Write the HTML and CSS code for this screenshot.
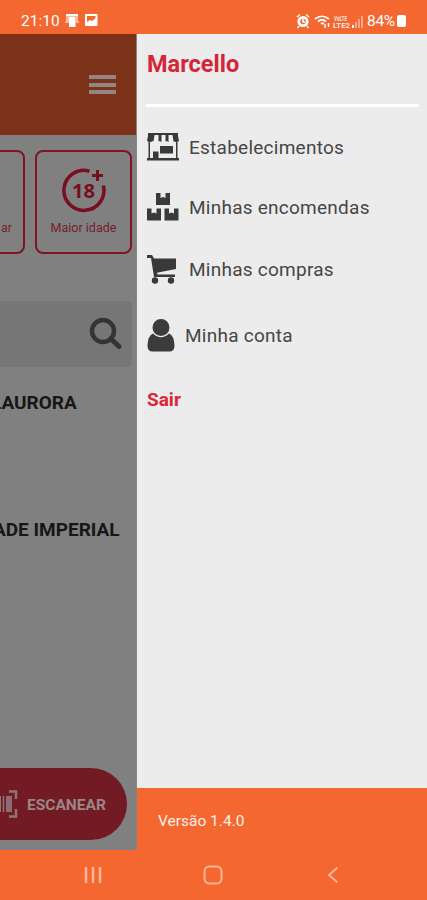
FILE: index.html
```html
<!DOCTYPE html>
<html lang="pt-BR">
<head>
<meta charset="utf-8">
<meta name="viewport" content="width=device-width">
<title>Menu</title>
<link rel="stylesheet" href="styles.css">
</head>
<body>
<div class="phone">
  <header class="status">
    <span class="clock">21:10</span>
    <svg class="status-left" width="34" height="16" viewBox="0 0 34 16" fill="#fff">
      <path d="M1 1h12v7h1v2h-3v4H5v-4H0V8h1z" opacity=".55"/><path d="M4 4h6v10H4zM1 1h12v2H1z"/>
      <path fill-rule="evenodd" d="M20 1h12.500v12H20zM22 3v6l3-2 2 1 3.500-3V3z"/>
    </svg>
    <svg class="status-right" width="69" height="17" viewBox="0 0 69 17" fill="none" stroke="#fff">
      <circle cx="7" cy="8.500" r="4.200" stroke-width="2.800"/><path d="M1 4l3-2.500M10 1.500L13 4M3 13l-1.500 2M11 13l1.500 2M7 6v3h2" stroke-width="1.500"/>
      <path d="M19 6q7-5.500 14 0M22 8.500q4-3.500 8 0M25 11q1.500-1.500 3 0" stroke-width="1.700"/>
      <path d="M29 11v4M32.500 10v4" stroke-width="1.500"/>
      <path d="M57 15v-3" stroke-width="2"/><path d="M60 15V9M63 15V6M66 15V3" stroke-width="1.700" opacity=".5"/>
      <text class="lte" x="38" y="7.500" textLength="13" lengthAdjust="spacingAndGlyphs">VoLTE</text><text class="lte" x="37" y="14.500" textLength="17" lengthAdjust="spacingAndGlyphs">LTE2</text>
    </svg>
    <span class="battery-text">84%</span>
    <span class="battery"></span>
  </header>
  <div class="body">
    <main class="page">
      <div class="topbar"><span class="burger"><i></i><i></i><i></i></span></div>
      <div class="cards">
        <div class="card card-cut"><span>ar</span></div>
        <div class="card card-age">
          <svg width="48" height="48" viewBox="0 0 48 48" fill="none" stroke="#760f20" stroke-width="3.500">
            <path d="M29.500 4.200A20 20 0 1 0 43.300 18.500"/><path d="M37.500 3v11M32 8.500h11" stroke-width="3"/>
            <text class="age" x="12" y="31" textLength="23" lengthAdjust="spacingAndGlyphs">18</text>
          </svg>
          <span>Maior idade</span>
        </div>
      </div>
      <div class="search">
        <svg width="34" height="34" viewBox="0 0 34 34" fill="none" stroke="#343434"><circle cx="14" cy="14" r="11" stroke-width="4.500"/><path d="M22 22l8 7.500" stroke-width="5" stroke-linecap="round"/></svg>
      </div>
      <h2 class="shop shop-a">LAURORA</h2>
      <h2 class="shop shop-b">ADE IMPERIAL</h2>
      <button class="scan">
        <svg width="18" height="28" viewBox="0 0 18 28" fill="none" stroke="#8d7477"><path d="M0 6v16" stroke-width="2"/><path d="M3.500 6v16" stroke-width="1.500"/><path d="M9 6v16" stroke="#8c6a76" stroke-width="6"/><path d="M9 1.500h7V9M16 19v7.500H9" stroke-width="2.500"/></svg>
        <span>ESCANEAR</span>
      </button>
    </main>
    <aside class="drawer">
      <h1 class="user">Marcello</h1>
      <hr>
      <nav>
        <a class="row row-1"><svg width="32" height="28" viewBox="0 0 32 28" fill="#393939">
          <path d="M1 0h30v3l1 5q-3 2-6 0-3 2-6.500 0-3.500 2-7 0-3 2-6.500 0-3 2-6 0L1 3z"/>
          <path d="M7.500 2h4v6.500q-2.500 2-5 0zM14.500 2h4v6.500q-2 2-4 0zM21.500 2h4l1 6.500q-2.500 2-5 0z" fill="#f2f2f2"/>
          <path d="M1.500 9h1.500v16H1.500zM29 9h1.500v16H29zM0 25h32v2.500H0zM6 18.500h5.500V25H6zM13 13h13v7.500H13z"/></svg><span>Estabelecimentos</span></a>
        <a class="row row-2"><svg width="32" height="28" viewBox="0 0 32 28" fill="#393939">
          <path d="M9 0h4.500v5l2.500-1 2.500 1V0H23v12H9zM0 15.500h4.500v5l2.500-1 2.500 1v-5H14v12H0zM17.500 15.500H22v5l2.500-1 2.500 1v-5h4.500v12h-14z"/></svg><span>Minhas encomendas</span></a>
        <a class="row row-3"><svg width="30" height="29" viewBox="0 0 30 29" fill="#393939">
          <path d="M0 0h5l2 3.500h22v10.500L10 17.800l.5 1.700H28V22H7L4 3H0z"/><circle cx="8" cy="25.500" r="3.200"/><circle cx="24" cy="25.500" r="3.200"/></svg><span>Minhas compras</span></a>
        <a class="row row-4"><svg width="28" height="33" viewBox="0 0 28 33" fill="#3b3b3b">
          <circle cx="14" cy="8.500" r="8.500"/><path d="M6 14.500q8 7.500 16 0 5 2 5.500 12 0 6-5 6h-17q-5 0-5-6 .5-10 5.500-12z"/></svg><span>Minha conta</span></a>
        <a class="logout">Sair</a>
      </nav>
      <footer class="version">Versão 1.4.0</footer>
    </aside>
  </div>
  <div class="navbar">
    <svg width="18" height="18" viewBox="0 0 18 18" stroke="#ffb798" stroke-width="2.500"><path d="M2 1v16M9 1v16M16 1v16"/></svg>
    <svg class="home" width="20" height="20" viewBox="0 0 20 20" fill="none" stroke="#ffb798" stroke-width="2"><rect x="1.500" y="1.500" width="17" height="17" rx="5"/></svg>
    <svg class="back" width="12" height="18" viewBox="0 0 12 18" fill="none" stroke="#ffb798" stroke-width="2"><path d="M10.500 1.500L2 9l8.500 7.500"/></svg>
  </div>
</div>
</body>
</html>
```
FILE: styles.css
```css
* { box-sizing: border-box; }
body { margin: 0; font-family: Roboto, sans-serif; }
.phone { width: 427px; height: 900px; overflow: hidden; background: #f46730; display: flex; flex-direction: column; }
svg { display: block; flex: none; }
.status { height: 34px; flex: none; display: flex; align-items: center; padding: 8px 0 0 21px; color: #fff; font-size: 15.5px; }
.clock { width: 39px; margin-right: 4px; }
.status-left { margin-left: 1px; }
.status-right { margin-left: 197px; }
.lte { font-size: 7px; font-weight: 700; fill: #fff; stroke: none; opacity: .85; }
.battery-text { margin-left: 2px; width: 30px; font-size: 15.5px; letter-spacing: -.3px; }
.battery { width: 9px; height: 12px; border-radius: 2px; background: #fff; }

.body { height: 816px; flex: none; display: flex; }
.page { width: 137px; flex: none; overflow: hidden; background: #808080; display: flex; flex-direction: column; border-right: 1px solid #858585; }
.topbar { height: 101px; flex: none; background: #7b3219; padding: 41px 0 0 89px; }
.burger { display: flex; flex-direction: column; gap: 3.5px; }
.burger i { width: 27px; height: 4px; background: #928583; }
.cards { display: flex; gap: 10px; margin-top: 15px; height: 104px; flex: none; margin-left: -72px; }
.card { width: 97px; flex: none; border: 2px solid #801326; border-radius: 8px; color: #76202e; font-size: 12.5px; display: flex; flex-direction: column; align-items: center; }
.card-cut { align-items: flex-end; padding: 68px 11px 0 0; }
.card-age { padding-top: 15px; }
.card-age span { margin-top: 5px; }
.age { font-family: "Open Sans", sans-serif; font-size: 20px; font-weight: 700; fill: #760f20; stroke: none; }
.search { height: 66px; width: 132px; margin-top: 47px; flex: none; border-radius: 0 5px 5px 0; background: #767676; display: flex; justify-content: flex-end; padding: 16px 9px 0 0; }
.shop { margin: 0; flex: none; width: max-content; font-size: 19px; line-height: 22px; font-weight: 700; color: #171717; white-space: nowrap; }
.shop-a { margin: 25px 0 0 -9px; }
.shop-b { margin: 105px 0 0 -7px; }
.scan { margin: 227px 0 0; width: 127px; height: 72px; flex: none; border: 0; border-radius: 0 36px 36px 0; background: #731b24; display: flex; align-items: center; gap: 9px; padding: 0; color: #9a8587; font: 700 15.5px Roboto, sans-serif; }
.scan span { padding-top: 2px; }

.drawer { flex: 1; background: #ececec; display: flex; flex-direction: column; }
.user { margin: 16px 0 0 10px; font-size: 23.5px; line-height: 28px; font-weight: 700; color: #d62438; }
hr { width: 273px; height: 3px; margin: 26px 0 0 9px; border: 0; background: #fff; flex: none; }
nav { flex: 1; padding-left: 10px; }
.row { display: flex; align-items: center; color: #464646; font-size: 19px; height: 34px; gap: 10px; letter-spacing: .25px; white-space: nowrap; }
.row-1 { margin-top: 23px; }
.row-2 { margin-top: 26px; }
.row-3 { margin-top: 28px; gap: 12px; }
.row-4 { margin-top: 32px; }
.logout { display: block; margin-top: 36px; font-size: 19px; line-height: 24px; font-weight: 700; color: #e02436; }
.version { height: 62px; background: #f46730; color: #fff0e8; font-size: 15.5px; line-height: 18px; padding: 24px 0 0 21px; }
.navbar { height: 50px; flex: none; display: flex; align-items: center; background: #f46730; padding-left: 84px; }
.home { margin-left: 101px; }
.back { margin-left: 104px; }
```
